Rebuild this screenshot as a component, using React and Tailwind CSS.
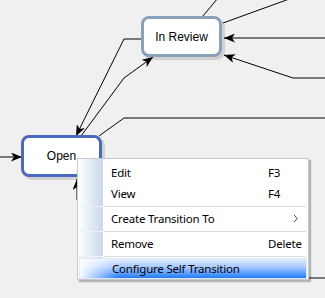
import React from 'react';

const lines = [
  { d: 'M203,16 L218,-2' },
  { d: 'M223,23 L292,-2' },
  { d: 'M327,38 L224,38', arrow: true },
  { d: 'M327,78 L293,78 L224,55', arrow: true },
  { d: 'M142,39 L124,39 L76,136', arrow: true },
  { d: 'M81,136 L124,78 L153,57', arrow: true },
  { d: 'M99,136 L124,118 L327,118' },
  { d: 'M-2,157 L22,157', arrow: true },
  { d: 'M77,200 L77,179', arrow: true },
  { d: 'M200,278 L327,278' },
];

const Gutter = ({ line }) => (
  <div className="w-[25px] shrink-0 self-stretch bg-linear-to-r from-white to-[#c9d8ea] flex items-center">
    {line && <div className="h-px w-full bg-[#eef3f9]" />}
  </div>
);

const MenuItem = ({ label, shortcut, submenu }) => (
  <div className="flex h-[21px] items-stretch">
    <Gutter />
    <div className="flex flex-1 items-center pl-[8px]">
      <span className="w-[157px]">{label}</span>
      <span className="flex-1">{shortcut}</span>
      {submenu && (
        <svg width="6" height="9" viewBox="0 0 6 9" className="mr-[9px]">
          <polyline points="1,1 4.5,4.5 1,8" fill="none" stroke="#444" strokeWidth="1" />
        </svg>
      )}
    </div>
  </div>
);

const Separator = () => (
  <div className="flex h-[4px] items-stretch">
    <Gutter line />
    <div className="flex flex-1 items-center pl-px pr-[2px]">
      <div className="h-px w-full bg-[#dcdcdc]" />
    </div>
  </div>
);

const Node = ({ label, className }) => (
  <div
    className={`absolute flex items-center justify-center rounded-[8px] border-[3px] bg-white text-[12px] text-black shadow-[3px_3px_0_rgba(0,0,0,0.13)] ${className}`}
    style={{ fontFamily: '"Liberation Sans", Arial, sans-serif' }}
  >
    {label}
  </div>
);

export default function App() {
  return (
    <div className="relative h-[298px] w-[325px] overflow-hidden bg-[#f0f0f0]">
      <svg className="absolute inset-0" width="325" height="298">
        <defs>
          <marker id="ah" markerWidth="12" markerHeight="9" refX="11" refY="4.5" orient="auto" markerUnits="userSpaceOnUse">
            <path d="M0,0 L11,4.5 L0,9 L3,4.5 z" fill="#000" />
          </marker>
        </defs>
        {lines.map((l, i) => (
          <path key={i} d={l.d} fill="none" stroke="#000" strokeWidth="1" markerEnd={l.arrow ? 'url(#ah)' : undefined} />
        ))}
      </svg>

      <Node label="In Review" className="left-[141px] top-[16px] h-[41px] w-[81px] border-[#8aa1bb]" />
      <Node label="Open" className="left-[21px] top-[135px] h-[42px] w-[81px] border-[#4a69bd]" />

      <div
        className="absolute left-[77px] top-[158px] w-[232px] border border-[#c4c9d2] bg-white text-[11.5px] tracking-[-0.2px] text-black shadow-[2px_2px_1px_rgba(0,0,0,0.25)]"
        style={{ fontFamily: '"Noto Sans", "Open Sans", sans-serif' }}
      >
        <div className="flex h-[3px]">
          <Gutter />
        </div>
        <MenuItem label="Edit" shortcut="F3" />
        <MenuItem label="View" shortcut="F4" />
        <Separator />
        <MenuItem label="Create Transition To" submenu />
        <Separator />
        <MenuItem label="Remove" shortcut="Delete" />
        <Separator />
        <div className="mx-px flex h-[21px] items-center border border-[#dfe8f7] bg-[linear-gradient(to_right,rgba(255,255,255,0.95),rgba(255,255,255,0)_38px),linear-gradient(to_bottom,#e4eefd,#a2c6ff_45%,#1f7dff)] pl-[32px]">
          Configure Self Transition
        </div>
      </div>
    </div>
  );
}
